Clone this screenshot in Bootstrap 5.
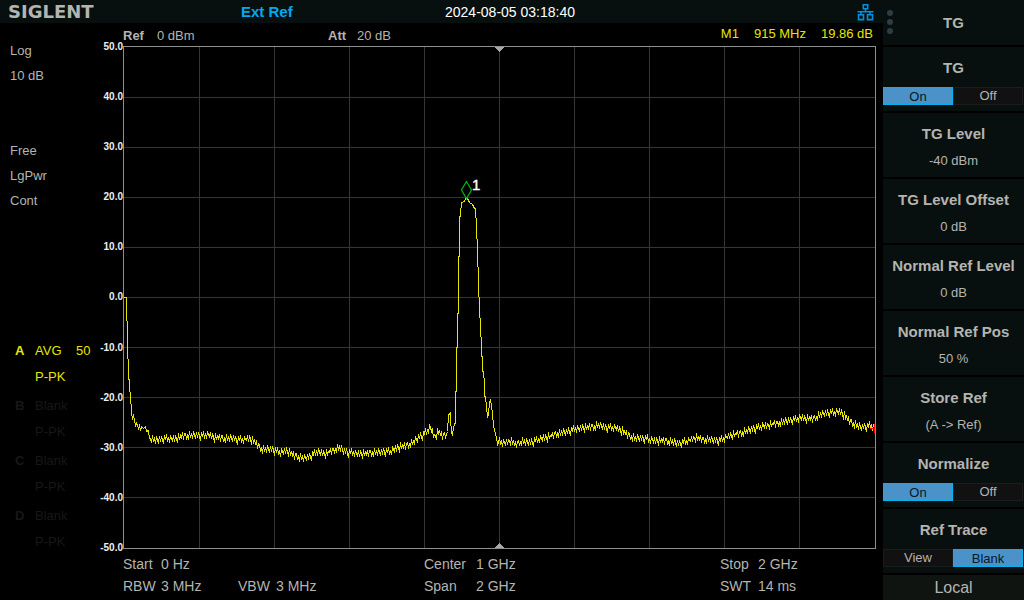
<!DOCTYPE html>
<html lang="en" data-bs-theme="dark">
<head>
<meta charset="utf-8">
<meta name="viewport" content="width=device-width, initial-scale=1">
<title>Spectrum Analyzer</title>
<link href="https://cdn.jsdelivr.net/npm/bootstrap@5.3.0/dist/css/bootstrap.min.css" rel="stylesheet">
<style>
  :root { --ink: #b4b4b0; --panel: #08100f; --trace: #e6e600; --on: #4a92c8; --edge: #00b4f0; }
  body { background: #000; color: var(--ink); font: 13px/20px "Liberation Sans", Arial, sans-serif; }
  .top-bar { background: var(--panel); height: 23px; font-size: 14px; line-height: 24px; }
  .maker { width: 241px; padding-left: 8px; font: bold 18px/24px "DejaVu Sans", sans-serif; }
  .ext-ref { width: 204px; color: #00a8f0; font-size: 15px; }
  .clock { color: #fff; }
  .status { width: 96px; padding-top: 15px; line-height: 25px; }
  .status .setup { padding-left: 10px; }
  .status .sweep { margin: 50px 0 125px; }
  .trace-info { display: grid; grid-template-columns: 20px 41px 1fr; padding-left: 15px; margin-bottom: 3px; line-height: 26px; color: #161816; }
  .trace-info.active { color: var(--trace); }
  .trace-info .detector { grid-column: 2 / 4; }
  .readout { height: 23px; line-height: 26px; padding-left: 27px; }
  .readout .ref-level { width: 205px; }
  .readout .tag { display: inline-block; min-width: 29px; }
  .readout .ref-level .tag { min-width: 34px; }
  .marker-info { color: var(--trace); line-height: 21px; padding-right: 10px; gap: 15px; }
  .scale { width: 27px; margin: -5px 0 -4px; font: bold 10px/11px "Liberation Sans", Arial, sans-serif; color: #eee; }
  .graph { min-width: 0; margin-right: 7px; }
  .settings { display: grid; grid-template-columns: 301fr 296fr 163fr; padding: 4px 0 3px 27px; font-size: 14px; line-height: 22px; }
  .settings .tag { display: inline-block; min-width: 38px; }
  .settings .wide .tag { min-width: 52px; }
  .settings .pair { display: inline-block; width: 115px; }
  .soft-menu { width: 141px; gap: 2px; }
  .soft-key { background: var(--panel); color: var(--ink); border: 0; padding: 11px 0 0; height: 64px; display: flex; flex-direction: column; align-items: center; width: 100%; }
  .soft-key .name, .menu-title { font-size: 15px; font-weight: bold; line-height: 20px; }
  .soft-key .setting { margin-top: 7px; }
  .menu-title { background: var(--panel); height: 45px; }
  .menu-title svg { left: 3px; top: 9px; }
  .toggle { margin-top: 9px; width: 100%; padding-right: 1px; }
  .toggle .btn { flex: 1 1 0; height: 18px; padding: 0; border: 1px solid #1c1c1c; border-radius: 0; background: #111; color: var(--ink); font-size: 13px; line-height: 16px; margin: 0 !important; }
  .toggle .btn-check:checked + .btn { background: var(--on); border-color: var(--edge); color: #06182a; line-height: 18px; }
  .local-key { background: #101411; color: var(--ink); border: 0; padding: 0; flex: 1 0 25px; font-size: 16px; }
</style>
</head>
<body>
<div class="d-flex min-vh-100">
  <div class="d-flex flex-column flex-grow-1">
    <header class="top-bar d-flex">
      <span class="maker">SIGLENT</span>
      <span class="ext-ref fw-bold">Ext Ref</span>
      <time class="clock" datetime="2024-08-05T03:18:40">2024-08-05 03:18:40</time>
      <svg class="ms-auto mt-1 me-1 pe-1" width="22" height="18" viewBox="0 0 18 18" fill="none" stroke="#0090dc" stroke-width="1.6" role="img" aria-label="Network connected">
        <path d="M6.300 .8h4.400v4H6.300zM1.500 10.800h5v4.800h-5zM10.500 10.800h5v4.800h-5zM8.500 5v2.800M.5 7.800h16M4 8v2.600M13 8v2.600"/>
      </svg>
    </header>
    <main class="d-flex flex-grow-1">
      <section class="status flex-shrink-0">
        <div class="setup"><div>Log</div><div>10 dB</div></div>
        <div class="setup sweep"><div>Free</div><div>LgPwr</div><div>Cont</div></div>
        <div class="trace-info active"><b>A</b><span>AVG</span><span>50</span><span class="detector">P-PK</span></div>
        <div class="trace-info"><b>B</b><span>Blank</span><span></span><span class="detector">P-PK</span></div>
        <div class="trace-info"><b>C</b><span>Blank</span><span></span><span class="detector">P-PK</span></div>
        <div class="trace-info"><b>D</b><span>Blank</span><span></span><span class="detector">P-PK</span></div>
      </section>
      <div class="d-flex flex-column flex-grow-1">
        <div class="readout d-flex">
          <span class="ref-level"><b class="tag">Ref</b>0 dBm</span>
          <span><b class="tag">Att</b>20 dB</span>
          <span class="marker-info d-flex ms-auto"><span>M1</span><span>915 MHz</span><span>19.86 dB</span></span>
        </div>
        <div class="d-flex flex-grow-1">
          <div class="scale d-flex flex-column justify-content-between text-end flex-shrink-0">
            <span>50.0</span><span>40.0</span><span>30.0</span><span>20.0</span><span>10.0</span><span>0.0</span><span>-10.0</span><span>-20.0</span><span>-30.0</span><span>-40.0</span><span>-50.0</span>
          </div>
          <svg class="graph flex-grow-1" viewBox="123 46 753 503" preserveAspectRatio="none" fill="none" shape-rendering="crispEdges" role="img" aria-label="Trace A, 0 Hz to 2 GHz">
            <path stroke="#323634" d="M199.500 46v502M274.500 46v502M349.500 46v502M424.500 46v502M499.500 46v502M574.500 46v502M649.500 46v502M724.500 46v502M799.500 46v502M123 97.500h752M123 147.500h752M123 197.500h752M123 247.500h752M123 297.500h752M123 347.500h752M123 397.500h752M123 447.500h752M123 497.500h752"/>
            <rect x="123.500" y="46.500" width="752" height="502" stroke="#8c908e"/>
            <path fill="#a8a8a8" d="M494.500 47h10l-5 5zM494.500 548h10l-5-5z"/>
            <path id="trace" stroke="#e6e600"/>
            <path stroke="#00b818" shape-rendering="auto" stroke-width="1.2" d="M466.500 181.500l5 8.500-5 8.500-5-8.500z"/>
            <text x="472" y="190" fill="#fff" stroke="#fff" stroke-width=".4" font-size="15">1</text>
            <path stroke="red" d="M870 428.500h5M874.500 424v9"/>
          </svg>
        </div>
        <div class="settings">
          <div><span class="pair"><span class="tag">Start</span>0 Hz</span></div>
          <div class="wide"><span class="tag">Center</span>1 GHz</div>
          <div><span class="tag">Stop</span>2 GHz</div>
          <div><span class="pair"><span class="tag">RBW</span>3 MHz</span><span class="pair"><span class="tag">VBW</span>3 MHz</span></div>
          <div class="wide"><span class="tag">Span</span>2 GHz</div>
          <div><span class="tag">SWT</span>14 ms</div>
        </div>
      </div>
    </main>
  </div>
  <aside class="soft-menu d-flex flex-column flex-shrink-0">
    <div class="menu-title position-relative d-flex align-items-center justify-content-center">
      <svg class="position-absolute" width="8" height="26" fill="#303c44" aria-hidden="true"><circle cx="4" cy="4" r="3"/><circle cx="4" cy="13" r="3"/><circle cx="4" cy="22" r="3"/></svg>
      <span>TG</span>
    </div>
    <div class="soft-key" role="group" aria-label="TG">
      <span class="name">TG</span>
      <div class="toggle d-flex">
        <input class="btn-check" type="radio" name="tg" id="tg-on" checked><label class="btn" for="tg-on">On</label>
        <input class="btn-check" type="radio" name="tg" id="tg-off"><label class="btn" for="tg-off">Off</label>
      </div>
    </div>
    <button class="soft-key" type="button"><span class="name">TG Level</span><span class="setting">-40 dBm</span></button>
    <button class="soft-key" type="button"><span class="name">TG Level Offset</span><span class="setting">0 dB</span></button>
    <button class="soft-key" type="button"><span class="name">Normal Ref Level</span><span class="setting">0 dB</span></button>
    <button class="soft-key" type="button"><span class="name">Normal Ref Pos</span><span class="setting">50 %</span></button>
    <button class="soft-key" type="button"><span class="name">Store Ref</span><span class="setting">(A -&gt; Ref)</span></button>
    <div class="soft-key" role="group" aria-label="Normalize">
      <span class="name">Normalize</span>
      <div class="toggle d-flex">
        <input class="btn-check" type="radio" name="norm" id="norm-on" checked><label class="btn" for="norm-on">On</label>
        <input class="btn-check" type="radio" name="norm" id="norm-off"><label class="btn" for="norm-off">Off</label>
      </div>
    </div>
    <div class="soft-key" role="group" aria-label="Ref Trace">
      <span class="name">Ref Trace</span>
      <div class="toggle d-flex">
        <input class="btn-check" type="radio" name="ref" id="ref-view"><label class="btn" for="ref-view">View</label>
        <input class="btn-check" type="radio" name="ref" id="ref-blank" checked><label class="btn" for="ref-blank">Blank</label>
      </div>
    </div>
    <button class="local-key" type="button">Local</button>
  </aside>
</div>
<script src="https://cdn.jsdelivr.net/npm/bootstrap@5.3.0/dist/js/bootstrap.bundle.min.js"></script>
<script>
  // Trace level by graph column: noise floor, filter passband, noise floor.
  const floorLeft = [[148,432],[150,438],[155,440],[165,438],[175,438],[183,435],[200,435],[208,434],[215,437],[230,438],[240,439],[250,438],[255,442],[262,449],[272,449],[280,452],[286,450],[292,454],[303,458],[310,456],[316,451],[325,453],[332,450],[338,447],[344,451],[350,452],[360,453],[375,452],[390,451],[397,447],[405,445],[413,442],[419,436],[423,434],[427,430],[430,427],[434,436],[438,431],[442,435],[446,433]];
  const onset = [[123,297],[126,297],[126,320],[127,321],[127,358],[128,359],[128,378],[129,380],[129,391],[130,392],[130,403],[131,404],[131,413],[132,418],[133,415],[134,420],[135,425],[136,423],[137,425],[138,428],[139,425],[140,430],[141,426],[143,428],[145,426],[146,431]];
  const passband = [[447,431],[448,415],[449,413],[450,412],[450,420],[451,431],[452,435],[453,427],[454,424],[455,422],[455,392],[456,390],[456,348],[457,346],[457,314],[458,312],[458,257],[459,255],[459,217],[460,215],[460,208],[461,207],[461,202],[464,201],[465,198],[467,198],[469,202],[472,204],[474,208],[475,208],[475,217],[476,218],[476,238],[477,239],[477,266],[478,267],[478,296],[479,297],[479,317],[480,318],[480,336],[481,337],[481,355],[482,357],[482,370],[483,372],[484,383],[484,395],[485,397],[486,406],[487,417],[488,414],[489,402],[490,400],[491,405],[492,414],[493,424],[494,430],[496,437],[497,444]];
  const floorRight = [[498,441],[505,442],[510,440],[515,444],[520,441],[530,442],[540,438],[550,436],[555,433],[565,432],[575,428],[585,427],[592,426],[598,425],[605,427],[615,427],[620,429],[626,433],[634,438],[645,438],[655,440],[665,440],[678,443],[682,442],[688,440],[695,437],[704,439],[718,440],[730,435],[745,431],[760,426],[775,423],[790,420],[800,417],[807,418],[813,418],[820,414],[830,412],[840,411],[848,419],[853,423],[860,427],[870,425],[874,427]];
  const ripple = [-2, 3, 0, 4, -4, 2, -2, 3, -4, 0, 3, -3, 2, -3, 1, 5, -3, 1, -4, 3, -1, 4, -3, 0, 2, -3, 3, -2, 0, 5, -4, 2, -1, 1, -3, 4, -2];

  function withRipple(knots) {
    const points = [];
    for (let i = 0; i + 1 < knots.length; i++) {
      const [x0, y0] = knots[i], [x1, y1] = knots[i + 1];
      for (let x = x0; x < x1; x++)
        points.push([x, Math.round(y0 + (y1 - y0) * (x - x0) / (x1 - x0)) + ripple[x % ripple.length]]);
    }
    return points;
  }

  const points = [...onset, ...withRipple(floorLeft), ...passband, ...withRipple(floorRight)];
  document.getElementById("trace").setAttribute("d", "M" + points.map(([x, y]) => (x + 0.5) + " " + (y + 0.5)).join("L"));
</script>
</body>
</html>
